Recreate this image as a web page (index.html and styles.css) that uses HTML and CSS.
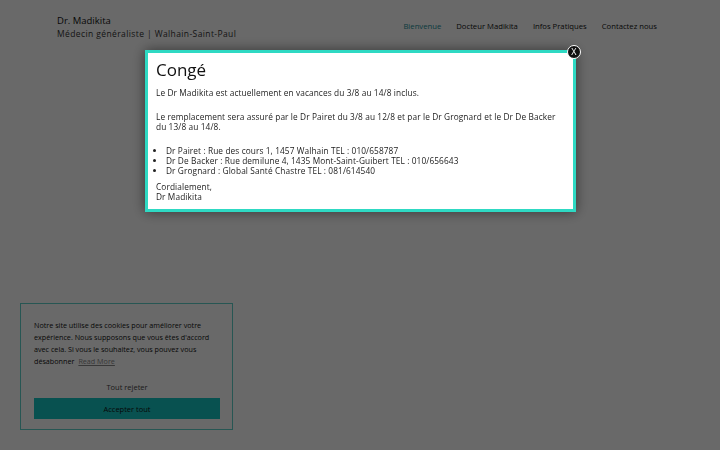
FILE: index.html
```html
<!DOCTYPE html>
<html lang="fr">
<head>
    <meta charset="UTF-8">
    <meta name="viewport" content="width=device-width, initial-scale=1.0">
    <title>Dr. Madikita</title>
    <link rel="stylesheet" href="styles.css">
</head>
<body>
    <header class="header">
        <div class="brand">
            <div class="brand-name">Dr. Madikita</div>
            <div class="brand-sub">Médecin généraliste | Walhain-Saint-Paul</div>
        </div>
        <nav class="nav">
            <a href="#" class="active">Bienvenue</a>
            <a href="#">Docteur Madikita</a>
            <a href="#">Infos Pratiques</a>
            <a href="#">Contactez nous</a>
        </nav>
    </header>

    <!-- cookie notice -->
    <div class="cookie">
        <p>Notre site utilise des cookies pour améliorer votre expérience. Nous supposons que vous êtes d'accord avec cela. Si vous le souhaitez, vous pouvez vous désabonner<a href="#">Read More</a></p>
        <div class="cookie-reject">Tout rejeter</div>
        <button class="cookie-accept">Accepter tout</button>
    </div>

    <div class="overlay">
        <div class="popup">
            <span class="close">X</span>
            <h2>Congé</h2>
            <p>Le Dr Madikita est actuellement en vacances du 3/8 au 14/8 inclus.</p>
            <p>Le remplacement sera assuré par le Dr Pairet du 3/8 au 12/8 et par le Dr Grognard et le Dr De Backer du 13/8 au 14/8.</p>
            <ul>
                <li>Dr Pairet : Rue des cours 1, 1457 Walhain TEL : 010/658787</li>
                <li>Dr De Backer : Rue demilune 4, 1435 Mont-Saint-Guibert TEL : 010/656643</li>
                <li>Dr Grognard : Global Santé Chastre TEL : 081/614540</li>
            </ul>
            <p class="sign">Cordialement,<br>Dr Madikita</p>
        </div>
    </div>
</body>
</html>
```

FILE: styles.css
```css
body {
    margin: 0;
    height: 450px;
    background: #fff;
    font-family: "Open Sans", "DejaVu Sans", sans-serif;
    color: #222;
    overflow: hidden;
}

.header {
    display: flex;
    justify-content: space-between;
    align-items: flex-start;
    padding: 14px 63px 0 57px;
}
.brand-name {
    font-size: 9.5px;
    color: #111;
}
.brand-sub {
    font-size: 8.5px;
    letter-spacing: 0.4px;
    color: #333;
    margin-top: 1px;
}
.nav {
    display: flex;
    gap: 15px;
    padding-top: 7px;
}
.nav a {
    font-size: 7.7px;
    color: #111;
    text-decoration: none;
}
.nav a.active {
    color: #1a8f99;
}

.cookie {
    position: fixed;
    left: 20px;
    bottom: 20px;
    width: 186px;
    padding: 15px 12px 10px 13px;
    border: 1px solid #5fd0ca;
    background: #fff;
}
.cookie p {
    margin: 0;
    font-size: 7.2px;
    line-height: 12px;
    color: #111;
}
.cookie p a {
    margin-left: 4px;
    color: #888;
}
.cookie-reject {
    text-align: center;
    font-size: 7.5px;
    color: #444;
    margin-top: 15px;
}
.cookie-accept {
    display: block;
    width: 100%;
    margin-top: 6px;
    height: 21px;
    border: 0;
    background: #15c4c2;
    color: #111;
    font-family: inherit;
    font-size: 7.5px;
}

.overlay {
    position: fixed;
    inset: 0;
    background: rgba(0, 0, 0, 0.59);
}
.popup {
    position: absolute;
    left: 145px;
    top: 50px;
    width: 404px;
    padding: 6px 13px 7px 8px;
    background: #fff;
    border: 3px solid #2ed9c3;
    box-shadow: 0 0 12px rgba(0, 0, 0, 0.5);
    font-size: 8.3px;
    letter-spacing: 0.1px;
    line-height: 10px;
    color: #222;
}
.popup h2 {
    margin: 0 0 7px;
    font-size: 17px;
    line-height: 22px;
    font-weight: normal;
    letter-spacing: 0;
    color: #111;
}
.popup p {
    margin: 0 0 14px;
}
.popup ul {
    margin: 0 0 6px;
    padding-left: 10px;
}
.popup .sign {
    margin: 0;
}
.close {
    position: absolute;
    right: -8px;
    top: -8px;
    width: 12px;
    height: 12px;
    border-radius: 50%;
    border: 1px solid #fff;
    background: #111;
    color: #fff;
    font-size: 9px;
    line-height: 12px;
    text-align: center;
}
```
